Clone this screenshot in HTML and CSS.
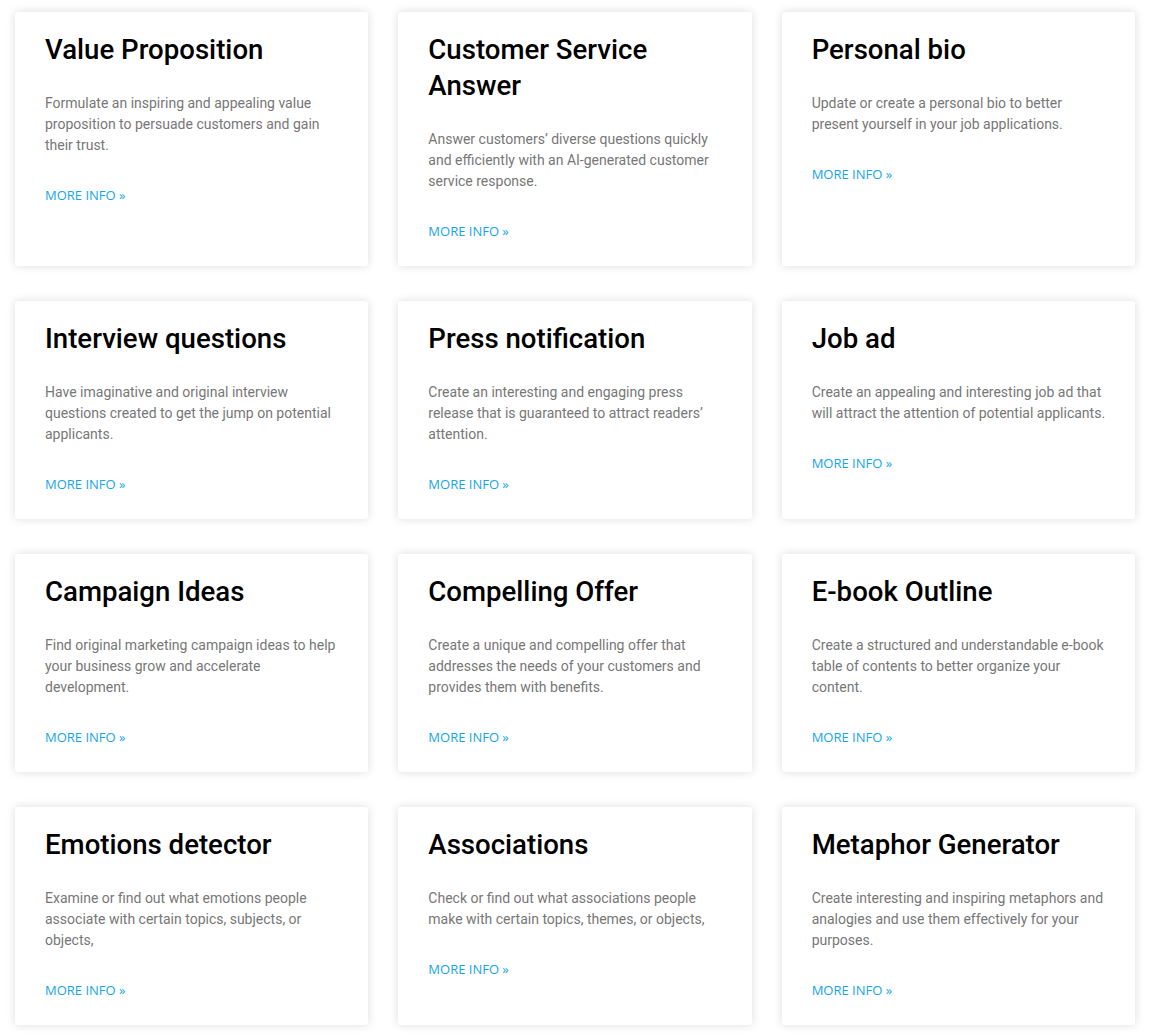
FILE: index.html
```html
<!DOCTYPE html>
<html lang="en">
<head>
  <meta charset="UTF-8">
  <title>AI Templates</title>
  <meta name="viewport" content="width=device-width, initial-scale=1">
  <link rel="stylesheet" href="styles.css">
</head>
<body>

  <div class="grid">
    <div class="card">
      <h2>Value Proposition</h2>
      <p>Formulate an inspiring and appealing value proposition to persuade customers and gain their trust.</p>
      <a href="#" class="more">MORE INFO »</a>
    </div>
    <div class="card">
      <h2>Customer Service Answer</h2>
      <p>Answer customers’ diverse questions quickly and efficiently with an AI-generated customer service response.</p>
      <a href="#" class="more">MORE INFO »</a>
    </div>
    <div class="card">
      <h2>Personal bio</h2>
      <p>Update or create a personal bio to better present yourself in your job applications.</p>
      <a href="#" class="more">MORE INFO »</a>
    </div>

    <div class="card">
      <h2>Interview questions</h2>
      <p>Have imaginative and original interview questions created to get the jump on potential applicants.</p>
      <a href="#" class="more">MORE INFO »</a>
    </div>
    <div class="card">
      <h2>Press notification</h2>
      <p>Create an interesting and engaging press release that is guaranteed to attract readers’ attention.</p>
      <a href="#" class="more">MORE INFO »</a>
    </div>
    <div class="card">
      <h2>Job ad</h2>
      <p>Create an appealing and interesting job ad that will attract the attention of potential applicants.</p>
      <a href="#" class="more">MORE INFO »</a>
    </div>

    <div class="card">
      <h2>Campaign Ideas</h2>
      <p>Find original marketing campaign ideas to help your business grow and accelerate development.</p>
      <a href="#" class="more">MORE INFO »</a>
    </div>
    <div class="card">
      <h2>Compelling Offer</h2>
      <p>Create a unique and compelling offer that addresses the needs of your customers and provides them with benefits.</p>
      <a href="#" class="more">MORE INFO »</a>
    </div>
    <div class="card">
      <h2>E-book Outline</h2>
      <p>Create a structured and understandable e-book table of contents to better organize your content.</p>
      <a href="#" class="more">MORE INFO »</a>
    </div>

    <div class="card">
      <h2>Emotions detector</h2>
      <p>Examine or find out what emotions people associate with certain topics, subjects, or objects,</p>
      <a href="#" class="more">MORE INFO »</a>
    </div>
    <div class="card">
      <h2>Associations</h2>
      <p>Check or find out what associations people make with certain topics, themes, or objects,</p>
      <a href="#" class="more">MORE INFO »</a>
    </div>
    <div class="card">
      <h2>Metaphor Generator</h2>
      <p>Create interesting and inspiring metaphors and analogies and use them effectively for your purposes.</p>
      <a href="#" class="more">MORE INFO »</a>
    </div>
  </div>

</body>
</html>
```

FILE: styles.css
```css
/* reset ringan */
* { box-sizing: border-box; margin: 0; padding: 0; }

body {
  font-family: Roboto, "Liberation Sans", sans-serif;
  background: #fff;
  padding: 12px 15px;
}

.grid {
  display: grid;
  grid-template-columns: repeat(3, 1fr);
  column-gap: 30px;
  row-gap: 35px;
}

.card {
  background: #fff;
  border-radius: 3px;
  box-shadow: 0 0 10px rgba(0,0,0,0.14);
  padding: 20px 26px 26px 30px;
}

.card h2 {
  font-size: 27.6px;
  line-height: 36px;
  font-weight: 500;
  color: #000;
  margin-bottom: 25px;
}

.card p {
  font-size: 14px;
  line-height: 21px;
  color: #777;
  margin-bottom: 30px;
}

.card .more {
  display: block;
  font-family: "Open Sans", sans-serif;
  font-size: 13px;
  line-height: 18px;
  color: #13a6e8;
  text-decoration: none;
}
```
